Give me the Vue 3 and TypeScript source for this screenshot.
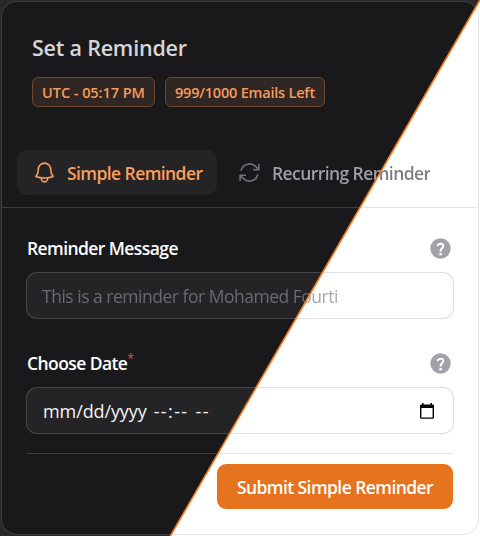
<script setup lang="ts">
import { ref } from "vue";

type TabId = "simple" | "recurring";

const tabs: { id: TabId; label: string; icon: string }[] = [
  {
    id: "simple",
    label: "Simple Reminder",
    icon: "M14.857 17.082a23.848 23.848 0 005.454-1.31A8.967 8.967 0 0118 9.75v-.7V9A6 6 0 006 9v.75a8.967 8.967 0 01-2.312 6.022c1.733.64 3.56 1.085 5.455 1.31m5.714 0a24.255 24.255 0 01-5.714 0m5.714 0a3 3 0 11-5.714 0",
  },
  {
    id: "recurring",
    label: "Recurring Reminder",
    icon: "M16.023 9.348h4.992v-.001M2.985 19.644v-4.992m0 0h4.992m-4.993 0l3.181 3.183a8.25 8.25 0 0013.803-3.7M4.031 9.865a8.25 8.25 0 0113.803-3.7l3.181 3.182m0-4.991v4.99",
  },
];

const helpMark = "M9.4 8.7c1.3-1.9 5.3-1.8 5.3 1 0 2.1-2.6 2.1-2.6 4.5";

const active = ref<TabId>("simple");
</script>

<template>
  <main class="page">
    <section class="card">
      <header class="head">
        <h1 class="head__title">Set a Reminder</h1>
        <div class="head__badges">
          <span class="badge badge--time">UTC - 05:17 PM</span>
          <span class="badge badge--quota">999/1000 Emails Left</span>
        </div>
      </header>

      <nav class="tabs">
        <button
          v-for="tab in tabs"
          :key="tab.id"
          type="button"
          class="tab"
          :class="{ 'tab--active': active === tab.id }"
          @click="active = tab.id"
        >
          <svg class="tab__icon" viewBox="0 0 24 24">
            <path :d="tab.icon" />
          </svg>
          <span class="tab__label">{{ tab.label }}</span>
        </button>
      </nav>
      <div class="rule"></div>

      <form class="form" @submit.prevent>
        <div class="field">
          <div class="field__head">
            <span class="field__label">Reminder Message</span>
            <svg class="field__help" viewBox="0 0 24 24">
              <circle cx="12" cy="12" r="9.75" />
              <path :d="helpMark" />
              <circle class="field__help-dot" cx="12.1" cy="17.4" r="1.3" />
            </svg>
          </div>
          <div class="field__box">
            <span class="field__placeholder">This is a reminder for Mohamed Fourti</span>
          </div>
        </div>

        <div class="field">
          <div class="field__head">
            <span class="field__label"
              >Choose Date<span class="field__required">*</span></span
            >
            <svg class="field__help" viewBox="0 0 24 24">
              <circle cx="12" cy="12" r="9.75" />
              <path :d="helpMark" />
              <circle class="field__help-dot" cx="12.1" cy="17.4" r="1.3" />
            </svg>
          </div>
          <div class="field__box field__box--date">
            <span class="field__date">mm/dd/yyyy</span>
            <span class="field__time">--:--</span>
            <span class="field__time">--</span>
            <svg class="field__calendar" viewBox="0 0 14 16">
              <path
                fill-rule="evenodd"
                d="M2 0h1.6v1.4h6.8V0H12v1.4h.6A1.4 1.4 0 0114 2.8v11.6a1.4 1.4 0 01-1.4 1.4H1.4A1.4 1.4 0 010 14.4V2.8a1.4 1.4 0 011.4-1.4H2zM1.4 5v9.4h11.2V5z"
              />
            </svg>
          </div>
        </div>

        <div class="rule rule--form"></div>
        <button class="submit" type="submit">Submit Simple Reminder</button>
      </form>
    </section>

    <svg class="seam" viewBox="0 0 480 536">
      <line x1="479.9" y1="0" x2="170.4" y2="536" />
    </svg>
  </main>
</template>

<style>
body {
  margin: 0;
}
</style>

<style scoped>
/* Every themed colour is a dark/light pair cut along one viewport-wide diagonal. */
.page {
  --cut: 415.2px;
  --outside: linear-gradient(120deg, #29292c var(--cut), #fff var(--cut)) fixed;
  --surface: linear-gradient(120deg, #19191b var(--cut), #fff var(--cut)) fixed;
  --field: linear-gradient(120deg, #242427 var(--cut), #fff var(--cut)) fixed;
  --edge: linear-gradient(120deg, #3c3c3f var(--cut), #e4e4e6 var(--cut)) fixed;
  --field-edge: linear-gradient(120deg, #454548 var(--cut), #dfdfe1 var(--cut)) fixed;
  --muted: linear-gradient(120deg, #a1a1aa var(--cut), #7c7c85 var(--cut)) fixed;
  --hint: linear-gradient(120deg, #6c6a74 var(--cut), #a5a5ad var(--cut)) fixed;
  position: relative;
  box-sizing: border-box;
  width: 480px;
  height: 536px;
  padding: 1px;
  overflow: hidden;
  background: var(--outside);
  font-family: "Segoe UI", "Open Sans", "Noto Sans", sans-serif;
}
.page * {
  box-sizing: border-box;
}
.card {
  height: 534px;
  border: 1px solid transparent;
  border-radius: 16px;
  background:
    var(--surface) padding-box,
    var(--edge) border-box;
}
.head {
  padding: 32px 30px 0;
}
.head__title {
  margin: 0;
  font-size: 21.5px;
  line-height: 28px;
  font-weight: 600;
  letter-spacing: -0.2px;
  color: #d6d6d8;
}
.head__badges {
  display: flex;
  gap: 10px;
  margin-top: 15px;
}
.badge {
  height: 30px;
  border: 1px solid #6b452e;
  border-radius: 6px;
  background: #302623;
  color: #f79b5c;
  font-size: 14.5px;
  line-height: 29px;
  font-weight: 600;
  text-align: center;
  white-space: nowrap;
}
.badge--time {
  width: 123px;
  letter-spacing: -0.05px;
}
.badge--quota {
  width: 160px;
  letter-spacing: -0.2px;
}
.tabs {
  display: flex;
  gap: 5px;
  padding: 43px 15px 12px;
}
.tab {
  display: flex;
  align-items: center;
  gap: 10px;
  height: 45px;
  padding: 0 14px 0 15px;
  border: 0;
  border-radius: 10px;
  background: none;
  color: #71717a;
  font: 600 17.5px/24px "Segoe UI", "Open Sans", "Noto Sans", sans-serif;
  letter-spacing: -0.58px;
  white-space: nowrap;
  cursor: pointer;
}
.tab--active {
  width: 200px;
  background: #242427;
  color: #fb9f5f;
}
.tab__icon {
  flex: none;
  width: 25px;
  height: 25px;
  fill: none;
  stroke: currentColor;
  stroke-width: 1.5;
  stroke-linecap: round;
  stroke-linejoin: round;
}
.tab__label {
  padding-top: 1px;
}
.tab:not(.tab--active) .tab__label {
  background: var(--muted);
  background-clip: text;
  color: transparent;
}
.rule {
  height: 1px;
  background: var(--edge);
}
.form {
  display: flex;
  flex-direction: column;
  padding: 27px 24px 0;
}
.field + .field {
  margin-top: 31px;
}
.field__head {
  display: flex;
  align-items: center;
  justify-content: space-between;
  height: 26px;
  padding: 0 1px;
}
.field__label {
  color: #fff;
  font-size: 17.5px;
  line-height: 24px;
  font-weight: 600;
  letter-spacing: -0.58px;
}
.field__required {
  color: #e0524f;
  font-size: 12px;
  line-height: 0;
  font-weight: 400;
  vertical-align: 7px;
}
.field__help {
  width: 25px;
  height: 25px;
  fill: #a1a1aa;
}
.field__help path {
  fill: none;
  stroke: #fff;
  stroke-width: 2;
  stroke-linecap: round;
}
.field__help-dot {
  fill: #fff;
}
.field__box {
  display: flex;
  align-items: center;
  height: 47px;
  margin-top: 11px;
  padding: 0 15px;
  border: 1px solid transparent;
  border-radius: 11px;
  background:
    var(--field) padding-box,
    var(--field-edge) border-box;
}
.field__placeholder {
  padding-top: 1px;
  background: var(--hint);
  background-clip: text;
  color: transparent;
  font-size: 17.5px;
  line-height: 26px;
  letter-spacing: -0.49px;
}
.field__box--date {
  padding: 0 19px 0 16px;
  color: #f4f4f5;
  font-size: 18px;
}
.field__date {
  padding-top: 1px;
  letter-spacing: -0.1px;
}
.field__time {
  margin-left: 7px;
  letter-spacing: 1.4px;
}
.field__calendar {
  width: 14px;
  height: 16px;
  margin-left: auto;
  fill: #000;
}
.rule--form {
  margin: 19px 1px 10px;
}
.submit {
  align-self: flex-end;
  width: 236px;
  height: 45px;
  margin-right: 1px;
  padding: 0;
  border: 0;
  border-radius: 9px;
  background: #e6731e;
  color: #fff;
  font: 600 17.5px/24px "Segoe UI", "Open Sans", "Noto Sans", sans-serif;
  letter-spacing: -0.57px;
  cursor: pointer;
}
.seam {
  position: absolute;
  inset: 0;
  width: 480px;
  height: 536px;
  pointer-events: none;
}
.seam line {
  stroke: #f97a1a;
  stroke-width: 1.6;
}
</style>
